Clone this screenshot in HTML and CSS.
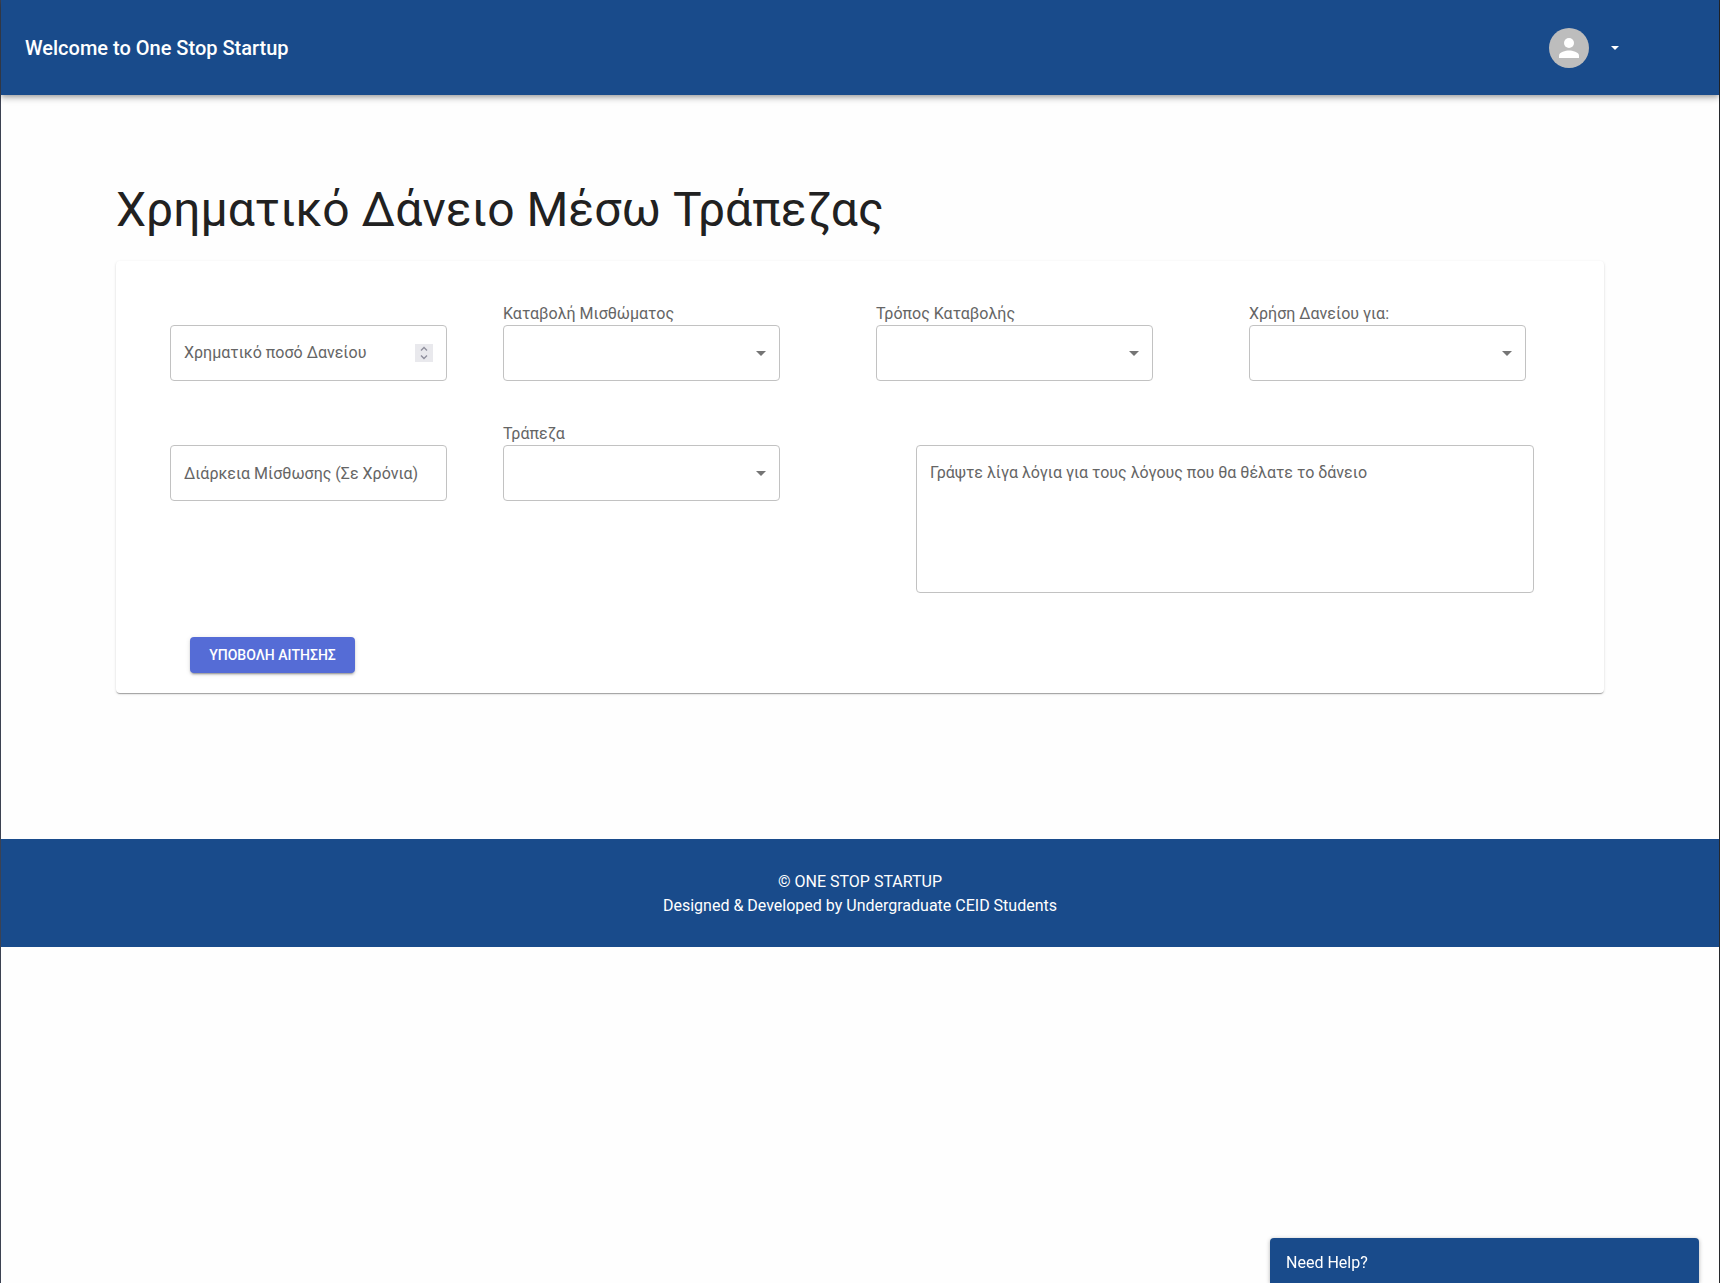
FILE: index.html
```html
<!DOCTYPE html>
<html lang="el">
<head>
  <meta charset="utf-8">
  <meta name="viewport" content="width=device-width, initial-scale=1">
  <title>One Stop Startup</title>
  <link rel="stylesheet" href="styles.css">
</head>
<body>
  <div class="page">
    <header class="app-bar">
      <div class="app-title">Welcome to One Stop Startup</div>
      <div class="account">
        <span class="avatar">
          <svg class="avatar-icon" viewBox="0 0 20 20" aria-hidden="true"><circle cx="10" cy="5" r="5"/><path d="M10 12.500C6.660 12.500 0 14.180 0 17.500V20h20v-2.500C20 14.180 13.340 12.500 10 12.500z"/></svg>
        </span>
        <button class="account-toggle" type="button" aria-label="Account menu">
          <svg class="toggle-icon" viewBox="0 0 8 4" aria-hidden="true"><path d="M0 0h8L4 4z"/></svg>
        </button>
      </div>
    </header>

    <main class="content">
      <h1 class="page-title">Χρηματικό Δάνειο Μέσω Τράπεζας</h1>
      <form class="card">
        <div class="field-grid">
          <div class="field field-first">
            <div class="control number-control">
              <input class="number-input" type="number" placeholder="Χρηματικό ποσό Δανείου" aria-label="Χρηματικό ποσό Δανείου">
              <button class="stepper" type="button" aria-label="Αλλαγή ποσού">
                <svg class="stepper-icon" viewBox="0 0 18 18" aria-hidden="true"><path d="M6 6.500l3-3 3 3M6 11.500l3 3 3-3"/></svg>
              </button>
            </div>
          </div>
          <div class="field">
            <label class="field-label" for="payment">Καταβολή Μισθώματος</label>
            <select class="control select" id="payment"><option></option></select>
          </div>
          <div class="field">
            <label class="field-label" for="method">Τρόπος Καταβολής</label>
            <select class="control select" id="method"><option></option></select>
          </div>
          <div class="field">
            <label class="field-label" for="usage">Χρήση Δανείου για:</label>
            <select class="control select" id="usage"><option></option></select>
          </div>
          <div class="field field-first">
            <input class="control text-input" type="text" placeholder="Διάρκεια Μίσθωσης (Σε Χρόνια)" aria-label="Διάρκεια Μίσθωσης (Σε Χρόνια)">
          </div>
          <div class="field">
            <label class="field-label" for="bank">Τράπεζα</label>
            <select class="control select" id="bank"><option></option></select>
          </div>
          <div class="field field-wide">
            <textarea class="control reasons" placeholder="Γράψτε λίγα λόγια για τους λόγους που θα θέλατε το δάνειο" aria-label="Γράψτε λίγα λόγια για τους λόγους που θα θέλατε το δάνειο"></textarea>
          </div>
        </div>
        <button class="submit" type="button">ΥΠΟΒΟΛΗ ΑΙΤΗΣΗΣ</button>
      </form>
    </main>

    <footer class="footer">
      <div>© ONE STOP STARTUP</div>
      <div>Designed &amp; Developed by Undergraduate CEID Students</div>
    </footer>
  </div>
  <button class="help" type="button">Need Help?</button>
</body>
</html>
```
FILE: styles.css
```css
:root {
  --brand: #194b8b;
  --outline: #c2c2c2;
  --muted: #656565;
}

*,
*::before,
*::after {
  box-sizing: border-box;
}

body {
  margin: 0;
  background: #fefefe;
  color: #212121;
  font-family: Roboto, "Noto Sans", sans-serif;
  font-size: 16px;
  line-height: 24px;
}

button,
input,
select,
textarea {
  font: inherit;
}

.page {
  min-height: 100vh;
  border-left: 1px solid #3c4252;
  border-right: 1px solid #26282c;
}

.app-bar {
  display: flex;
  align-items: center;
  justify-content: space-between;
  min-height: 95px;
  padding: 0 96px 0 24px;
  background: var(--brand);
  color: #fff;
  box-shadow: 0 2px 4px -1px rgba(0, 0, 0, .2), 0 4px 5px rgba(0, 0, 0, .14), 0 1px 10px rgba(0, 0, 0, .12);
}

.app-title {
  font-size: 20px;
  font-weight: 500;
  line-height: 32px;
}

.account {
  display: flex;
  align-items: center;
  gap: 18px;
}

.avatar {
  display: flex;
  align-items: center;
  justify-content: center;
  width: 40px;
  height: 40px;
  border-radius: 50%;
  background: #bdbdbd;
}

.avatar-icon {
  width: 20px;
  height: 20px;
  fill: #fff;
}

.account-toggle {
  display: flex;
  align-items: center;
  padding: 4px;
  border: 0;
  background: none;
}

.toggle-icon {
  width: 8px;
  height: 4px;
  fill: #fff;
}

.content {
  padding: 87px 115px 146px;
}

.page-title {
  margin: 0 0 23px;
  font-size: 48px;
  font-weight: 400;
  line-height: 56px;
}

.card {
  padding: 40px 0 20px;
  border-radius: 4px;
  background: #fff;
  box-shadow: 0 2px 1px -1px rgba(0, 0, 0, .2), 0 1px 1px rgba(0, 0, 0, .14), 0 1px 3px rgba(0, 0, 0, .12);
}

.field-grid {
  display: grid;
  grid-template-columns: 371fr 373fr 373fr 371fr;
  row-gap: 40px;
}

.field {
  display: flex;
  flex-direction: column;
  min-width: 0;
  padding-left: 16px;
}

.field-first {
  padding: 24px 0 0 54px;
}

.field-wide {
  grid-column: span 2;
  padding: 24px 70px 0 56px;
}

.field-label {
  height: 24px;
  color: var(--muted);
  line-height: 26px;
}

.control {
  width: 277px;
  max-width: 100%;
  height: 56px;
  border: 1px solid var(--outline);
  border-radius: 4px;
  background-color: #fff;
  color: #212121;
}

.control::placeholder,
.number-input::placeholder {
  color: var(--muted);
  opacity: 1;
}

.text-input {
  padding: 0 13px;
}

.number-control {
  display: flex;
  align-items: center;
  padding: 0 13px;
}

.number-input {
  flex: 1;
  min-width: 0;
  padding: 0;
  border: 0;
  background: none;
  appearance: textfield;
}

.number-input::-webkit-inner-spin-button {
  display: none;
}

.stepper {
  display: flex;
  padding: 0;
  border: 0;
  background: #e9e9ed;
}

.stepper-icon {
  width: 18px;
  height: 18px;
  fill: none;
  stroke: #8f8f9d;
  stroke-width: 1.4;
}

.select {
  padding: 0 32px 0 13px;
  appearance: none;
  background-image: url("data:image/svg+xml,%3Csvg xmlns='http://www.w3.org/2000/svg' viewBox='0 0 10 5'%3E%3Cpath d='M0 0h10L5 5z' fill='%23757575'/%3E%3C/svg%3E");
  background-position: right 13px center;
  background-repeat: no-repeat;
  background-size: 10px 5px;
}

.reasons {
  width: 100%;
  height: 148px;
  padding: 15px 13px;
  resize: none;
}

.submit {
  display: block;
  min-width: 165px;
  margin: 44px 0 0 74px;
  padding: 6px 16px;
  border: 0;
  border-radius: 4px;
  background: #556cd6;
  color: #fff;
  font-size: 14px;
  font-weight: 500;
  box-shadow: 0 3px 1px -2px rgba(0, 0, 0, .2), 0 2px 2px rgba(0, 0, 0, .14), 0 1px 5px rgba(0, 0, 0, .12);
}

.footer {
  padding: 31px 16px 29px;
  background: var(--brand);
  color: #fff;
  text-align: center;
}

/* Chat launcher stays docked to the bottom of the window */
.help {
  position: fixed;
  right: 21px;
  bottom: 0;
  width: 429px;
  max-width: 90%;
  height: 45px;
  padding: 4px 16px 0;
  border: 0;
  border-radius: 4px 4px 0 0;
  background: var(--brand);
  color: #fff;
  text-align: left;
  box-shadow: 0 1px 4px rgba(0, 0, 0, .3);
}
```
